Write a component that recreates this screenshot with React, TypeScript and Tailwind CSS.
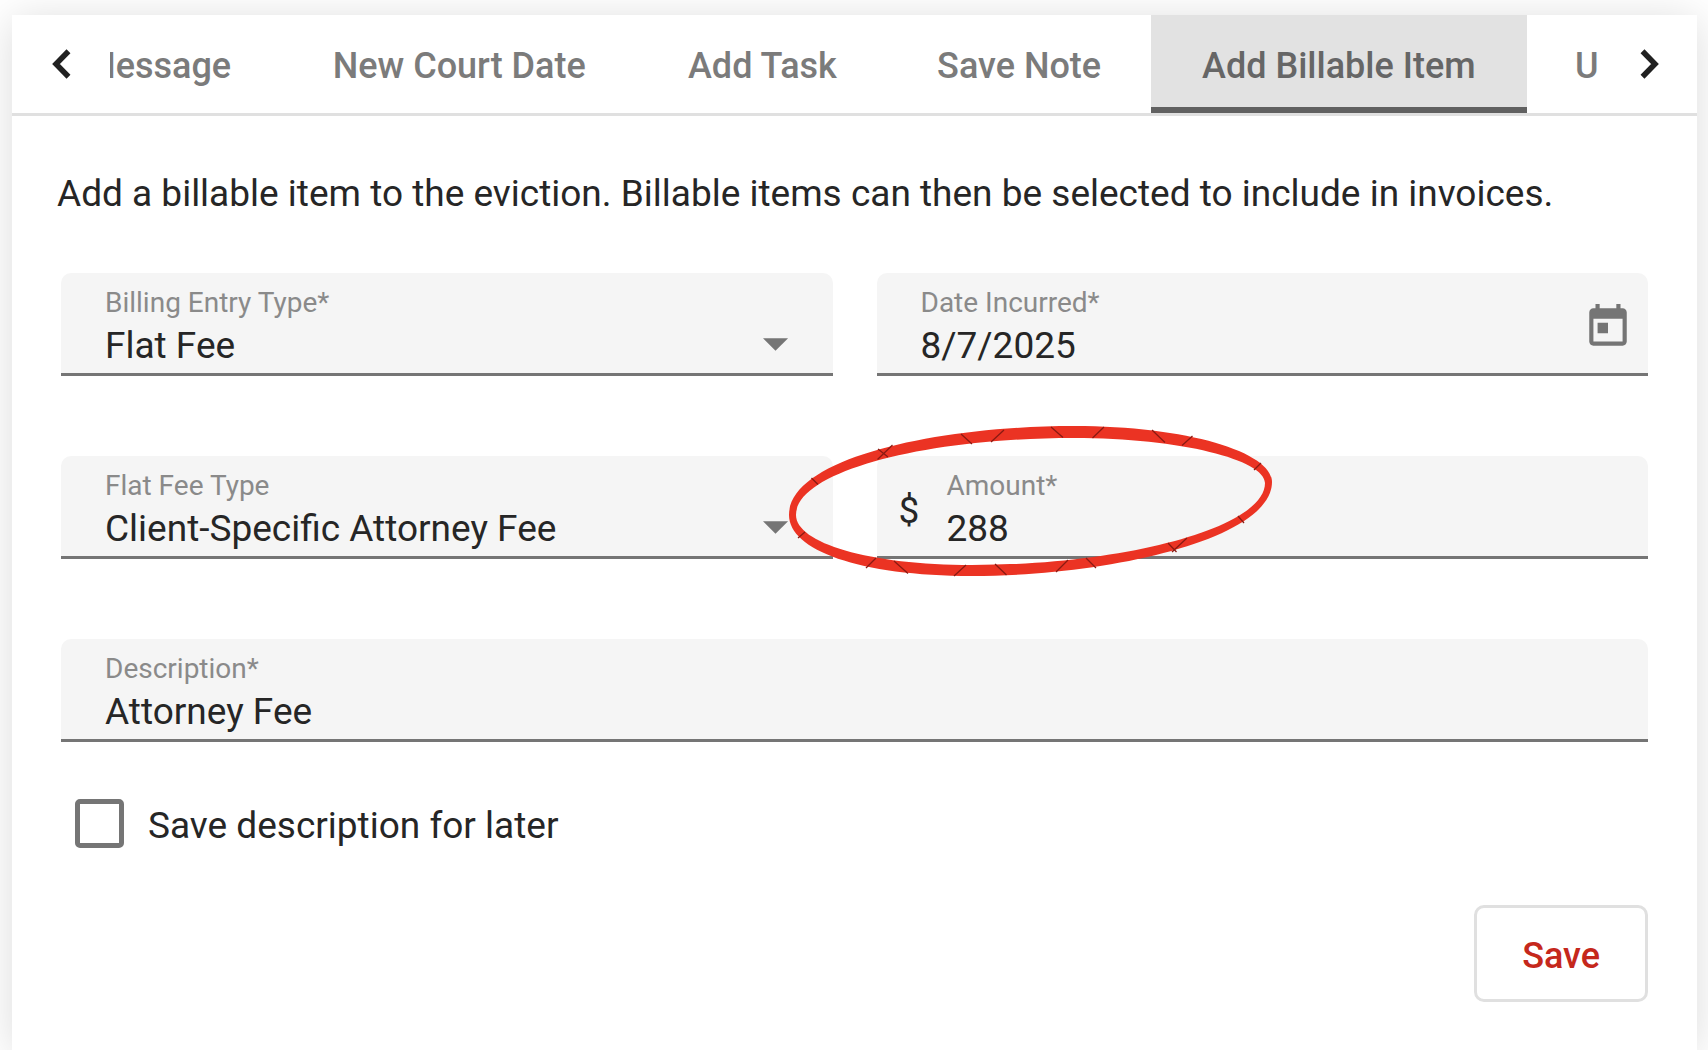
import { useState } from 'react'
import type { ReactNode } from 'react'

type FieldProps = {
  id: string
  label: string
  required?: boolean
  prefix?: string
  icon?: ReactNode
  children: ReactNode
}

const valueClass =
  'block h-[50px] w-full appearance-none bg-transparent p-0 text-[37px] leading-[50px] text-[#262626] outline-none'

function Chevron({ flipped = false }: { flipped?: boolean }) {
  return (
    <svg viewBox="0 0 19 30" className="h-[30px] w-[19px]" aria-hidden="true">
      <path
        d={flipped ? 'M2.500 2.300 15 15 2.500 27.700' : 'M16.500 2.300 4 15 16.500 27.700'}
        fill="none"
        stroke="#212121"
        strokeWidth="5.5"
      />
    </svg>
  )
}

function CaretDown() {
  return (
    <svg viewBox="0 0 26 13" className="pointer-events-none mb-[20px] h-[13px] w-[26px] self-end" aria-hidden="true">
      <path d="M0 0h26L13 13z" fill="#757575" />
    </svg>
  )
}

function Field({ id, label, required = false, prefix, icon, children }: FieldProps) {
  return (
    <div className="flex rounded-t-[10px] border-b-[3px] border-[#757575] bg-[#f5f5f5] pb-0.5 pt-3">
      {prefix ? (
        <span className="w-[70px] self-center pl-[22px] text-[37px] leading-[48px] text-[#262626]">{prefix}</span>
      ) : (
        <span className="w-11" />
      )}
      <div className="min-w-0 flex-1">
        <label htmlFor={id} className="block text-[28px] leading-9 text-[#8a8a8a]">
          {label}
          {required && <span>*</span>}
        </label>
        {children}
      </div>
      {icon}
    </div>
  )
}

// Hand-drawn style marker ring, thinnest at the left and right ends
function HighlightRing() {
  return (
    <svg
      viewBox="0 0 487 154"
      className="pointer-events-none absolute -left-[90px] -top-8 h-[154px] w-[487px]"
      aria-hidden="true"
    >
      <path
        fillRule="evenodd"
        fill="#eb3323"
        d="M2 91C2 34 150 2 287 2C400 2 485 28 485 58C485 115 322 152 185 152C72 152 2 126 2 91ZM9 91C9 47 140 14 287 14C394 14 478 36 478 59C478 104 336 141 185 141C82 141 9 119 9 91Z"
      />
      <path
        fill="none"
        stroke="#8a1a12"
        strokeWidth="1.3"
        d="M174 10l11 10M217 6l-13 12M264 3l12 10.500M317 3l-11.500 11M365 6l13 12.500M405.500 12l-10.500 9.500M474 39l-7 7M451 92l6 7M400 114l-15 14M381 119l8.500 9M299 134l10 10M281 136l-12 12M208 140l11.500 11M179 141l-12 11M107 137l14 12.500M89 134l-10 10M18 108l-7 6M24.500 54l6.500 6.500M91 25l10 8M105.500 21l-15 14.500"
      />
    </svg>
  )
}

function ActionTabs() {
  const tabClass = 'flex items-center justify-center overflow-hidden whitespace-nowrap pt-1'

  return (
    <div className="flex border-b-[3px] border-[#e0e0e0]">
      <button type="button" aria-label="Previous tabs" className="flex h-[98px] w-[98px] items-center pl-10">
        <Chevron />
      </button>
      <div
        role="tablist"
        className="grid h-[98px] min-w-0 flex-1 grid-cols-[171fr_356fr_250fr_263fr_376fr_72fr] text-[36px] font-medium leading-[48px] text-[#7b7b7b]"
      >
        <button type="button" role="tab" aria-selected="false" className="flex items-center justify-end overflow-hidden whitespace-nowrap pr-[50px] pt-1">
          Message
        </button>
        <button type="button" role="tab" aria-selected="false" className={tabClass}>
          New Court Date
        </button>
        <button type="button" role="tab" aria-selected="false" className={tabClass}>
          Add Task
        </button>
        <button type="button" role="tab" aria-selected="false" className={tabClass}>
          Save Note
        </button>
        <button
          type="button"
          role="tab"
          aria-selected="true"
          className="flex items-center justify-center whitespace-nowrap border-b-[6px] border-[#616161] bg-[#e2e2e2] pt-[10px] text-[#666666]"
        >
          Add Billable Item
        </button>
        <button type="button" role="tab" aria-selected="false" className="flex items-center overflow-hidden pl-12 pt-1">
          U
        </button>
      </div>
      <button type="button" aria-label="Next tabs" className="flex h-[98px] w-[98px] items-center justify-end pr-[38px]">
        <Chevron flipped />
      </button>
    </div>
  )
}

export default function App() {
  const [entryType, setEntryType] = useState('Flat Fee')
  const [feeType, setFeeType] = useState('Client-Specific Attorney Fee')
  const [date, setDate] = useState('8/7/2025')
  const [amount, setAmount] = useState('288')
  const [description, setDescription] = useState('Attorney Fee')
  const [saveForLater, setSaveForLater] = useState(false)

  return (
    <div className="flex min-h-screen flex-col overflow-hidden bg-white pl-3 pr-[11px] pt-[15px] font-['Roboto','Liberation_Sans',sans-serif] text-[#262626]">
      <main className="flex-1 bg-white shadow-[0_4px_40px_rgba(0,0,0,0.14)]">
        <ActionTabs />

        <form className="px-[49px] pb-12 pt-[54px]" onSubmit={(event) => event.preventDefault()}>
          <p className="-ml-1 text-[37px] leading-[48px]">
            Add a billable item to the eviction. Billable items can then be selected to include in invoices.
          </p>

          <div className="mt-[55px] grid grid-cols-2 gap-x-11 gap-y-20">
            <Field id="entry-type" label="Billing Entry Type" required>
              <div className="flex pr-11">
                <select
                  id="entry-type"
                  value={entryType}
                  onChange={(event) => setEntryType(event.target.value)}
                  className={valueClass}
                >
                  <option>Flat Fee</option>
                </select>
                <CaretDown />
              </div>
            </Field>

            <Field
              id="date-incurred"
              label="Date Incurred"
              required
              icon={
                <button type="button" aria-label="Open calendar" className="mr-[15px] mt-[17px] size-[50px]">
                  <svg viewBox="0 0 24 24" className="size-[50px]" fill="#757575" aria-hidden="true">
                    <path d="M19 3h-1V1h-2v2H8V1H6v2H5c-1.110 0-1.990.9-1.990 2L3 19c0 1.100.89 2 2 2h14c1.100 0 2-.9 2-2V5c0-1.100-.9-2-2-2zm0 16H5V8h14v11zM7 10h5v5H7z" />
                  </svg>
                </button>
              }
            >
              <input
                id="date-incurred"
                type="text"
                value={date}
                onChange={(event) => setDate(event.target.value)}
                className={valueClass}
              />
            </Field>

            <Field id="fee-type" label="Flat Fee Type">
              <div className="flex pr-11">
                <select
                  id="fee-type"
                  value={feeType}
                  onChange={(event) => setFeeType(event.target.value)}
                  className={valueClass}
                >
                  <option>Client-Specific Attorney Fee</option>
                </select>
                <CaretDown />
              </div>
            </Field>

            <div className="relative">
              <Field id="amount" label="Amount" required prefix="$">
                <input
                  id="amount"
                  type="text"
                  inputMode="decimal"
                  value={amount}
                  onChange={(event) => setAmount(event.target.value)}
                  className={valueClass}
                />
              </Field>
              <HighlightRing />
            </div>

            <div className="col-span-2">
              <Field id="description" label="Description" required>
                <input
                  id="description"
                  type="text"
                  value={description}
                  onChange={(event) => setDescription(event.target.value)}
                  className={valueClass}
                />
              </Field>
            </div>
          </div>

          <div className="mt-[57px] flex gap-6 pl-[14px]">
            <input
              id="save-description"
              type="checkbox"
              checked={saveForLater}
              onChange={(event) => setSaveForLater(event.target.checked)}
              className="size-[49px] appearance-none rounded-[5px] border-[5px] border-[#757575] bg-white checked:bg-[#757575]"
            />
            <label htmlFor="save-description" className="text-[37px] leading-[54px]">
              Save description for later
            </label>
          </div>

          <div className="mt-[52px] flex justify-end">
            <button
              type="submit"
              className="h-[97px] rounded-[10px] border-[3px] border-[#e0e0e0] px-[45px] pt-1 text-[36px] font-medium leading-[48px] text-[#c5281c]"
            >
              Save
            </button>
          </div>
        </form>
      </main>
    </div>
  )
}
